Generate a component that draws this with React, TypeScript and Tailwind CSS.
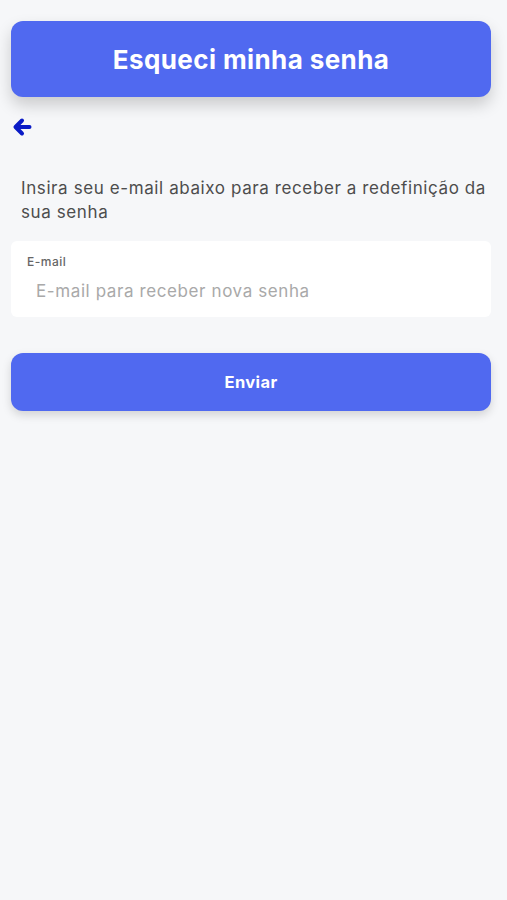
import React, { FC, useState } from 'react'

const ArrowLeft: FC = () => (
  <svg width="20" height="20" viewBox="0 0 20 20" className="block">
    <path
      d="M17.5 10H4M10 3.5L3.5 10L10 16.5"
      fill="none"
      stroke="#0a1bc6"
      strokeWidth="4"
      strokeLinecap="round"
      strokeLinejoin="round"
    />
  </svg>
)

const App: FC = () => {
  const [email, setEmail] = useState<string>('')

  return (
    <div className="min-h-[900px] bg-[#f6f7f9] pl-[11px] pr-[16px] pt-[21px]" style={{ fontFamily: 'Inter, "Noto Sans", sans-serif' }}>
      <div className="h-[76px] rounded-xl bg-[#5069f0] shadow-[0_8px_16px_rgba(0,0,0,0.18)] flex items-center justify-center">
        <h1 className="text-white text-[26px] font-bold tracking-[0.4px]">Esqueci minha senha</h1>
      </div>

      <button className="mt-[20px] ml-[1px] block">
        <ArrowLeft />
      </button>

      <p className="mt-[39px] pl-[10px] text-[17px] leading-[24px] tracking-[0.6px] text-[#4d4d4d]">
        Insira seu e-mail abaixo para receber a redefinição da sua senha
      </p>

      <div className="mt-[17px] h-[76px] rounded-md bg-white px-4 pt-[13px]">
        <label className="block text-[12px] font-medium text-[#666] leading-[16px] tracking-[0.5px]">E-mail</label>
        <input
          className="mt-[9px] ml-[9px] w-[430px] bg-transparent text-[17px] leading-[24px] tracking-[0.6px] text-[#444] placeholder:text-[#a9a9a9] outline-none"
          placeholder="E-mail para receber nova senha"
          value={email}
          onChange={e => setEmail(e.target.value)}
        />
      </div>

      <button className="mt-[36px] h-[58px] w-full rounded-xl bg-[#5069f0] shadow-[0_4px_10px_rgba(0,0,0,0.15)] text-white text-[16.5px] font-bold tracking-[0.4px]">
        Enviar
      </button>
    </div>
  )
}

export default App
